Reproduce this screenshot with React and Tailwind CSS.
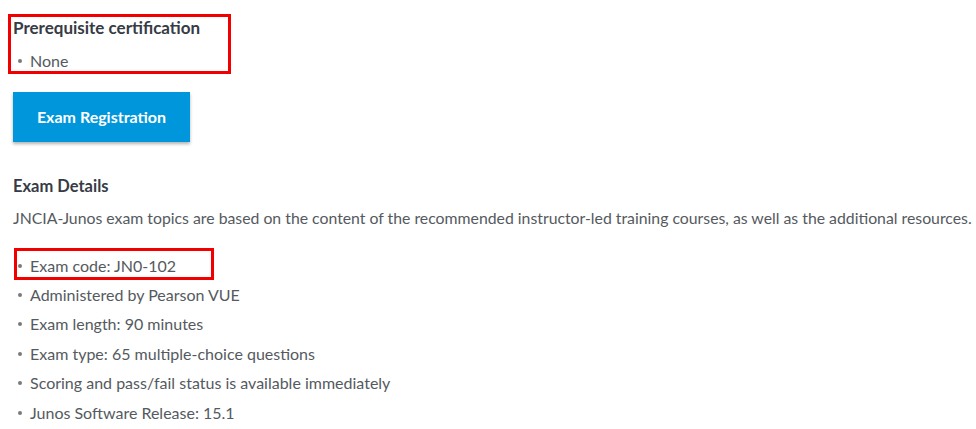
import React from 'react'

const examItems = [
  'Exam code: JN0-102',
  'Administered by Pearson VUE',
  'Exam length: 90 minutes',
  'Exam type: 65 multiple-choice questions',
  'Scoring and pass/fail status is available immediately',
  'Junos Software Release: 15.1',
]

const Bullet = ({ children }) => (
  <li className="flex items-center h-[29.4px]">
    <span className="w-[4px] h-[4px] rounded-full bg-[#7a7a7a] ml-[5px] mr-[8px]" />
    <span>{children}</span>
  </li>
)

const App = () => {
  return (
    <div className="w-[976px] h-[429px] bg-white overflow-hidden pl-[13px] text-[16px] text-[#555a60] font-['Lato','Open_Sans',sans-serif]">
      {/* Prerequisite */}
      <div className="relative">
        <div className="absolute left-[-5px] top-[14px] w-[223px] h-[60px] border-[3px] border-[#f20000]" />
        <h3 className="pt-[18px] leading-[20px] text-[17px] font-bold text-[#363b45]">Prerequisite certification</h3>
        <ul className="mt-[13px]">
          <li className="flex items-center h-[20px]">
            <span className="w-[4px] h-[4px] rounded-full bg-[#7a7a7a] ml-[5px] mr-[8px]" />
            <span>None</span>
          </li>
        </ul>
      </div>

      {/* Registration button */}
      <button className="mt-[21px] w-[177px] h-[50px] bg-[#0096dc] text-white font-bold text-[16px] shadow-[0_2px_3px_rgba(0,0,0,0.3)]">
        Exam Registration
      </button>

      {/* Exam details */}
      <h3 className="mt-[34px] leading-[20px] text-[16.5px] font-bold text-[#363b45]">Exam Details</h3>
      <p className="mt-[12px] leading-[20px] text-[15.8px] whitespace-nowrap">
        JNCIA-Junos exam topics are based on the content of the recommended instructor-led training courses, as well as the additional resources.
      </p>

      <div className="relative mt-[23px]">
        <div className="absolute left-[1px] top-[-3px] w-[200px] h-[32px] border-[3px] border-[#f20000]" />
        <ul>
          {examItems.map((item) => (
            <Bullet key={item}>{item}</Bullet>
          ))}
        </ul>
      </div>
    </div>
  )
}

export default App
